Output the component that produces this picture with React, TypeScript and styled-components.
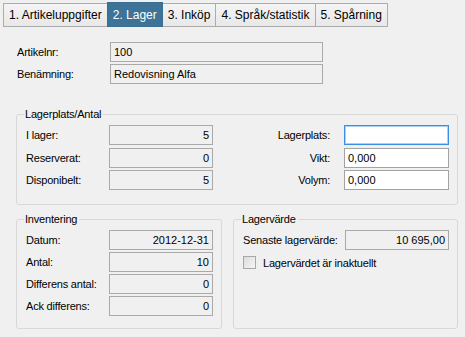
import styled, { createGlobalStyle } from "styled-components";

const GlobalStyle = createGlobalStyle`
  html, body {
    margin: 0;
    padding: 0;
    background: #f0f0f0;
  }
  body {
    font-family: "Liberation Sans", Arial, sans-serif;
    font-size: 11px;
    color: #000;
  }
`;

const Page = styled.div`
  width: 465px;
  height: 337px;
  padding: 2px 0 0 3px;
  box-sizing: border-box;
  display: flex;
  flex-direction: column;
`;

const TabBar = styled.div`
  display: flex;
  align-items: flex-end;
  height: 25px;
`;

const Tab = styled.div<{ $active?: boolean }>`
  height: ${(p) => (p.$active ? 25 : 24)}px;
  box-sizing: border-box;
  padding: 0 5px;
  margin-right: -1px;
  display: flex;
  align-items: center;
  font-size: 12px;
  border: 1px solid ${(p) => (p.$active ? "#3a6f92" : "#acacac")};
  background: ${(p) =>
    p.$active ? "#3d7396" : "linear-gradient(#f4f4f4, #e8e8e8)"};
  color: ${(p) => (p.$active ? "#fff" : "#000")};
  position: relative;
  z-index: ${(p) => (p.$active ? 1 : 0)};
`;

const Content = styled.div`
  padding: 15px 0 0 13px;
  display: flex;
  flex-direction: column;
`;

const TopFields = styled.div`
  display: grid;
  grid-template-columns: 93px 213px;
  row-gap: 2px;
  padding-left: 1px;
  align-items: center;
`;

const Label = styled.span<{ $right?: boolean }>`
  white-space: nowrap;
  letter-spacing: -0.2px;
  text-align: ${(p) => (p.$right ? "right" : "left")};
`;

const Field = styled.div<{ $editable?: boolean; $focus?: boolean; $num?: boolean }>`
  height: 20px;
  box-sizing: border-box;
  border: 1px solid ${(p) => (p.$focus ? "#3b8de6" : p.$editable ? "#a3a3a3" : "#a9a9a9")};
  box-shadow: ${(p) => (p.$focus ? "inset 0 0 0 1px #a9d1f7" : "none")};
  background: ${(p) => (p.$editable ? "#fff" : "#f0f0f0")};
  display: flex;
  align-items: center;
  justify-content: ${(p) => (p.$num ? "flex-end" : "flex-start")};
  padding: 0 3px;
  font-size: 11px;
  white-space: nowrap;
`;

const Group = styled.fieldset<{ $w: number; $h: number }>`
  margin: 0;
  width: ${(p) => p.$w}px;
  height: ${(p) => p.$h}px;
  box-sizing: border-box;
  border: 1px solid #d8d8d8;
  border-radius: 3px;
  padding: 4px 8px 0 9px;
  min-width: 0;
`;

const Legend = styled.legend`
  padding: 0 2px 0 1px;
  margin-left: -2px;
  font-size: 11px;
  line-height: 13px;
  letter-spacing: -0.2px;
`;

const StockGroupWrap = styled.div`
  margin-top: 24px;
`;

const StockGrid = styled.div`
  display: grid;
  grid-template-columns: 83px 104px 1fr 105px;
  grid-auto-rows: 20px;
  row-gap: 2.5px;
  align-items: center;
`;

const RightLabel = styled(Label)`
  padding-right: 14px;
`;

const BottomRow = styled.div`
  display: flex;
  gap: 11px;
  margin-top: 8px;
`;

const InvGrid = styled.div`
  display: grid;
  grid-template-columns: 83px 104px;
  grid-auto-rows: 20px;
  row-gap: 2px;
  align-items: center;
`;

const ValueGrid = styled.div`
  display: grid;
  grid-template-columns: 102px 104px;
  grid-auto-rows: 20px;
  align-items: center;
`;

const CheckRow = styled.label`
  display: flex;
  align-items: center;
  gap: 7px;
  margin-top: 6px;
  letter-spacing: -0.2px;
`;

const CheckBox = styled.span`
  width: 13px;
  height: 13px;
  box-sizing: border-box;
  border: 1px solid #a8a8a8;
  background: linear-gradient(135deg, #dcdcdc, #f6f6f6);
  display: inline-block;
`;

const tabs = [
  "1. Artikeluppgifter",
  "2. Lager",
  "3. Inköp",
  "4. Språk/statistik",
  "5. Spårning",
];

export default function App() {
  return (
    <>
      <GlobalStyle />
      <Page>
        <TabBar>
          {tabs.map((t, i) => (
            <Tab key={t} $active={i === 1}>
              {t}
            </Tab>
          ))}
        </TabBar>
        <Content>
          <TopFields>
            <Label>Artikelnr:</Label>
            <Field>100</Field>
            <Label>Benämning:</Label>
            <Field>Redovisning Alfa</Field>
          </TopFields>

          <StockGroupWrap>
            <Group $w={442} $h={97}>
              <Legend>Lagerplats/Antal</Legend>
              <StockGrid>
                <Label>I lager:</Label>
                <Field $num>5</Field>
                <RightLabel $right>Lagerplats:</RightLabel>
                <Field $editable $focus />
                <Label>Reserverat:</Label>
                <Field $num>0</Field>
                <RightLabel $right>Vikt:</RightLabel>
                <Field $editable>0,000</Field>
                <Label>Disponibelt:</Label>
                <Field $num>5</Field>
                <RightLabel $right>Volym:</RightLabel>
                <Field $editable>0,000</Field>
              </StockGrid>
            </Group>
          </StockGroupWrap>

          <BottomRow>
            <Group $w={206} $h={116}>
              <Legend>Inventering</Legend>
              <InvGrid>
                <Label>Datum:</Label>
                <Field $num>2012-12-31</Field>
                <Label>Antal:</Label>
                <Field $num>10</Field>
                <Label>Differens antal:</Label>
                <Field $num>0</Field>
                <Label>Ack differens:</Label>
                <Field $num>0</Field>
              </InvGrid>
            </Group>
            <Group $w={225} $h={116}>
              <Legend>Lagervärde</Legend>
              <ValueGrid>
                <Label>Senaste lagervärde:</Label>
                <Field $num>10 695,00</Field>
              </ValueGrid>
              <CheckRow>
                <CheckBox />
                Lagervärdet är inaktuellt
              </CheckRow>
            </Group>
          </BottomRow>
        </Content>
      </Page>
    </>
  );
}
